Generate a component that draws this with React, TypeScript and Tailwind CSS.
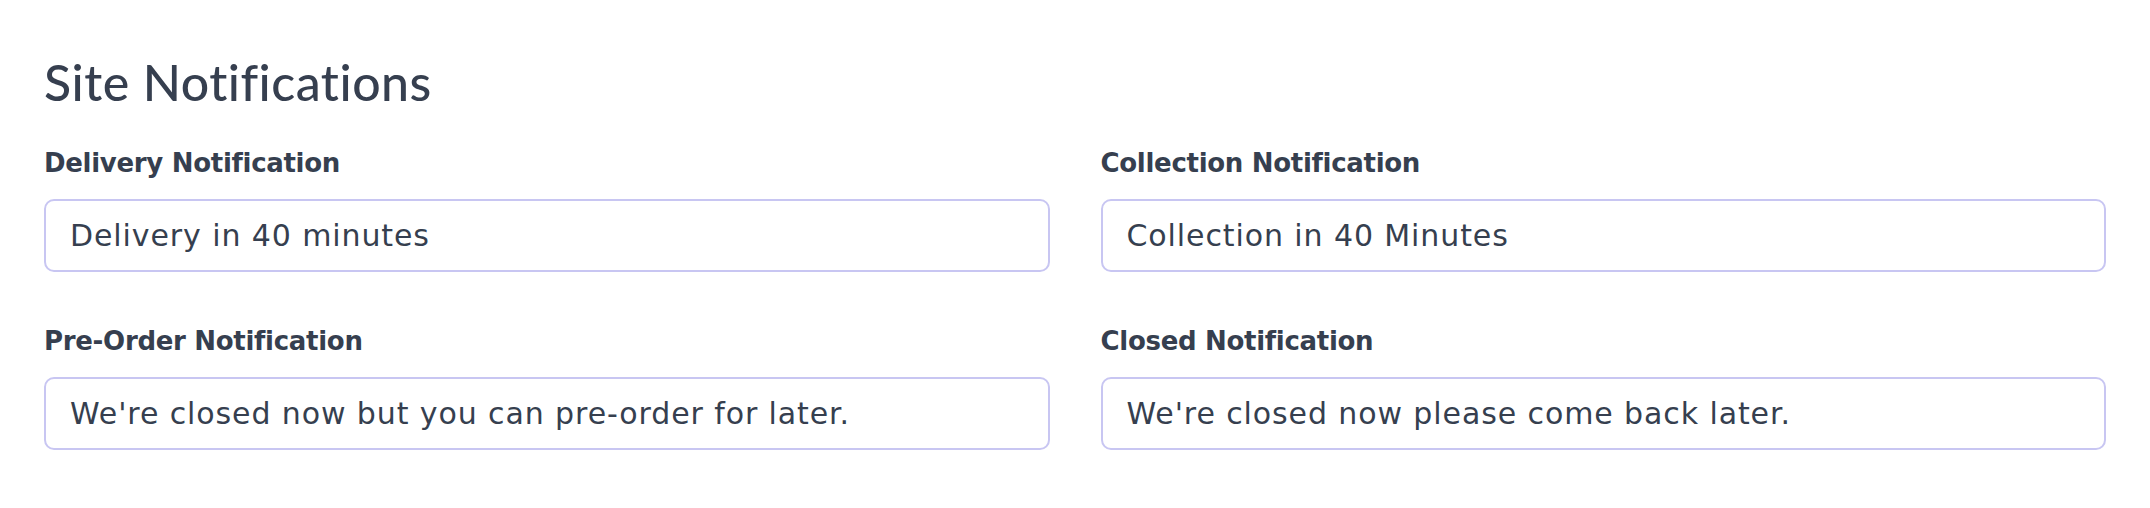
const fields = [
  { label: "Delivery Notification", value: "Delivery in 40 minutes" },
  { label: "Collection Notification", value: "Collection in 40 Minutes" },
  { label: "Pre-Order Notification", value: "We're closed now but you can pre-order for later." },
  { label: "Closed Notification", value: "We're closed now please come back later." },
];

const App = () => {
  return (
    <div className="w-[2150px] h-[508px] bg-white px-[44px] pt-[51px] text-[#363f4f] font-['DejaVu_Sans',sans-serif]">
      <h2 className="text-[50px] leading-[62px] font-medium font-['Lato',sans-serif] tracking-[0.5px]">Site Notifications</h2>
      <div className="grid grid-cols-2 gap-x-[51px] gap-y-[51px] mt-[32px]">
        {fields.map((f) => (
          <div key={f.label} className="flex flex-col">
            <label className="text-[26px] leading-[36px] font-bold tracking-[-0.3px]">{f.label}</label>
            <input
              type="text"
              defaultValue={f.value}
              className="mt-[18px] h-[73px] w-full rounded-[10px] border-2 border-[#c8c6f2] px-[24px] text-[30px] tracking-[0.9px] text-[#363f4f] outline-none"
            />
          </div>
        ))}
      </div>
    </div>
  );
};

export default App;
